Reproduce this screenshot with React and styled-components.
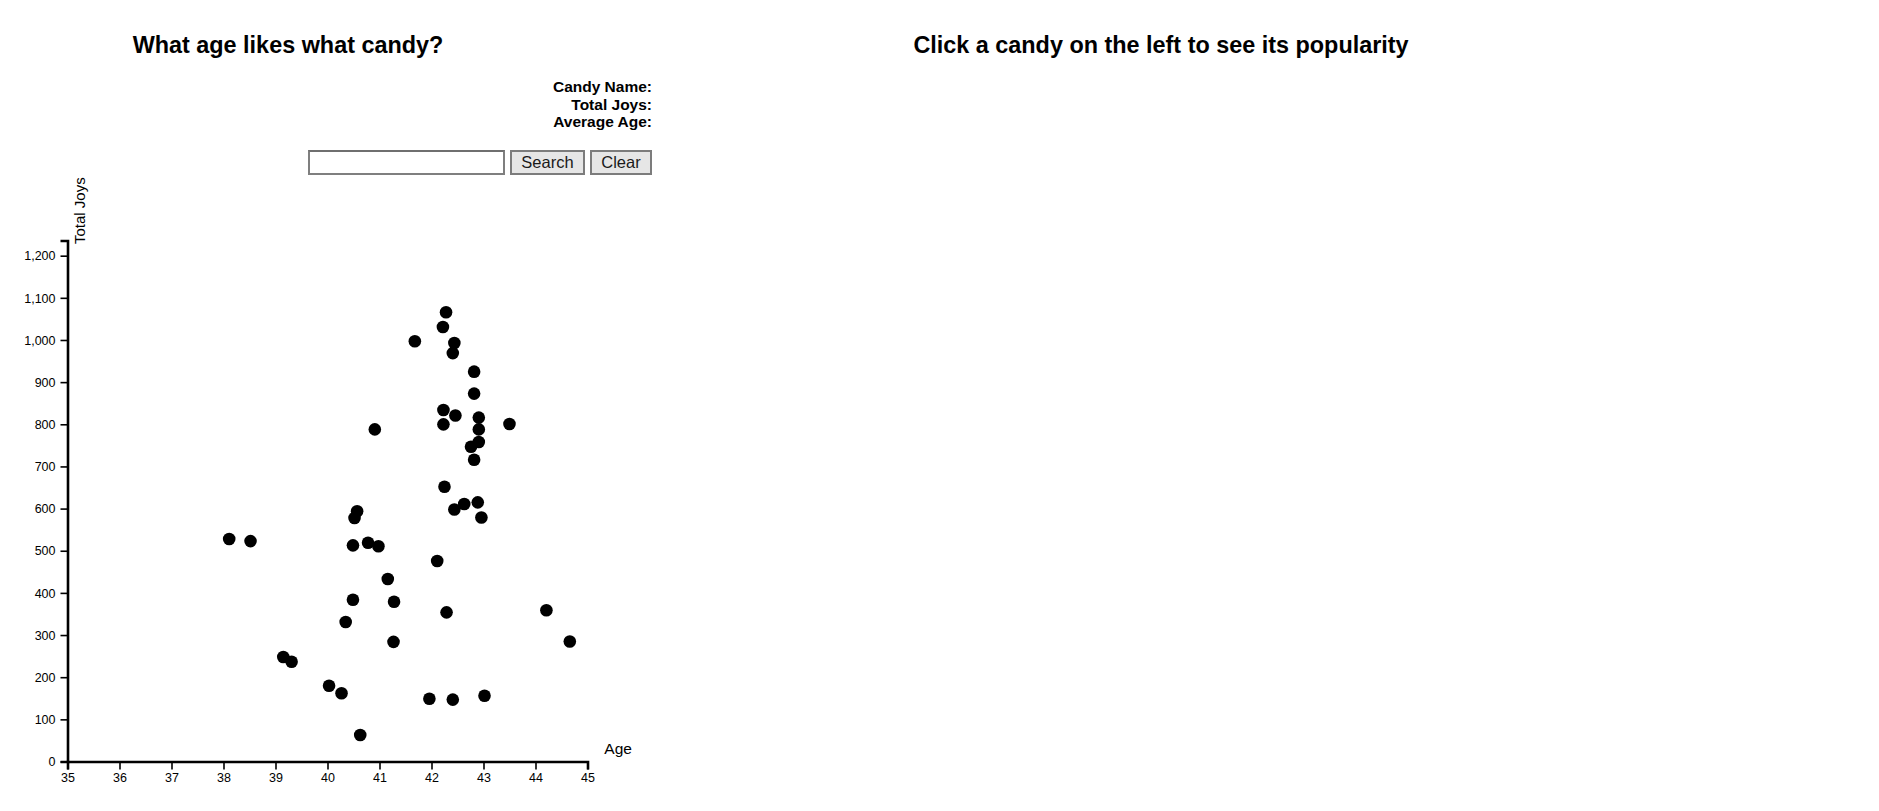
import React from 'react'
import styled, { createGlobalStyle } from 'styled-components'

const GlobalStyle = createGlobalStyle`
  html, body {
    margin: 0;
    padding: 0;
    background: #ffffff;
  }
  body {
    font-family: "Liberation Sans", Arial, sans-serif;
    color: #000;
  }
`

const Page = styled.div`
  display: flex;
  padding: 8px;
`

const LeftPanel = styled.div`
  flex: 0 0 644px;
  display: flex;
  flex-direction: column;
`

const RightPanel = styled.div`
  flex: 0 0 1018px;
`

const Title = styled.h2`
  width: ${(p) => p.width || '100%'};
  margin: 24px 0 19.4px;
  font-size: 23.4px;
  font-weight: bold;
  line-height: 26.4px;
  text-align: center;
`

const Info = styled.div`
  text-align: right;
  font-size: 15.5px;
  font-weight: bold;
  line-height: 17.7px;
`

const SearchRow = styled.div`
  display: flex;
  justify-content: flex-end;
  gap: 5px;
  margin-top: 19px;
  height: 25px;
`

const SearchInput = styled.input`
  box-sizing: border-box;
  width: 197px;
  height: 25px;
  border: 2px solid #7f7f7f;
  border-top-color: #6f6f6f;
  background: #fff;
  padding: 0 3px;
  font-family: "Liberation Sans", Arial, sans-serif;
  font-size: 15px;
`

const Button = styled.button`
  box-sizing: border-box;
  width: ${(p) => p.w}px;
  height: 25px;
  padding: 0;
  border: 2px solid #7c7c7c;
  background: #e6e6e6;
  color: #1a1a1a;
  font-family: "Liberation Sans", Arial, sans-serif;
  font-size: 16.5px;
  line-height: 21px;
  cursor: pointer;
`

const Chart = styled.svg`
  display: block;
  margin-top: 1px;
  font-family: "Liberation Sans", Arial, sans-serif;
`

const candies = [
  [42.27, 1067], [42.21, 1032], [41.67, 998], [42.43, 994], [42.4, 970],
  [42.81, 926], [42.81, 874], [42.22, 835], [42.45, 822], [42.9, 817],
  [42.22, 801], [43.49, 802], [40.9, 789], [42.9, 789], [42.9, 759],
  [42.75, 748], [42.81, 717], [42.24, 653], [42.88, 616], [42.62, 612],
  [42.43, 599], [42.95, 580], [40.56, 595], [40.51, 579], [38.1, 529],
  [38.51, 524], [40.48, 514], [40.77, 520], [40.97, 512], [42.1, 477],
  [41.15, 434], [40.48, 385], [41.27, 380], [42.28, 355], [44.2, 360],
  [40.34, 332], [41.26, 285], [44.65, 286], [39.14, 249], [39.3, 238],
  [40.02, 181], [40.26, 163], [41.95, 150], [42.4, 148], [43.01, 157],
  [40.62, 64],
]

const M = { left: 60, top: 65 }
const W = 520
const H = 521
const X_MIN = 35
const X_MAX = 45
const Y_MAX = 1236
const TICK = 7.5

const sx = (v) => ((v - X_MIN) / (X_MAX - X_MIN)) * W
const sy = (v) => H - (v / Y_MAX) * H

const xTicks = Array.from({ length: 11 }, (_, i) => 35 + i)
const yTicks = Array.from({ length: 13 }, (_, i) => i * 100)

const fmt = (n) => n.toLocaleString('en-US')

const ScatterPlot = () => (
  <Chart width="644" height="620">
    <g transform={`translate(${M.left},${M.top})`}>
      {/* x axis */}
      <g transform={`translate(0,${H})`}>
        {xTicks.map((t) => (
          <g key={t} transform={`translate(${sx(t)},0)`}>
            <line y2={TICK} stroke="#000" strokeWidth="1.6" />
            <text y="20" textAnchor="middle" fontSize="12.5" fill="#000">
              {t}
            </text>
          </g>
        ))}
        <path d={`M0,${TICK}V0H${W}V${TICK}`} fill="none" stroke="#000" strokeWidth="2.6" />
        <text x={W + 16.3} y="-7.7" fontSize="15.5" fill="#000">
          Age
        </text>
      </g>

      {/* y axis */}
      <g>
        {yTicks.map((t) => (
          <g key={t} transform={`translate(0,${sy(t)})`}>
            <line x2={-TICK} stroke="#000" strokeWidth="1.6" />
            <text x="-12.5" dy="0.34em" textAnchor="end" fontSize="12.5" fill="#000">
              {fmt(t)}
            </text>
          </g>
        ))}
        <path d={`M${-TICK},0H0V${H}H${-TICK}`} fill="none" stroke="#000" strokeWidth="2.6" />
        <text transform="translate(16.8,3) rotate(-90)" fontSize="15" fill="#000">
          Total Joys
        </text>
      </g>

      {candies.map(([age, joys], i) => (
        <circle key={i} cx={sx(age)} cy={sy(joys)} r="6.3" fill="#000" />
      ))}
    </g>
  </Chart>
)

const App = () => {
  return (
    <>
      <GlobalStyle />
      <Page>
        <LeftPanel>
          <Title width="560px">What age likes what candy?</Title>
          <Info>
            <div>Candy Name:</div>
            <div>Total Joys:</div>
            <div>Average Age:</div>
          </Info>
          <SearchRow>
            <SearchInput type="text" />
            <Button w={75}>Search</Button>
            <Button w={62}>Clear</Button>
          </SearchRow>
          <ScatterPlot />
        </LeftPanel>
        <RightPanel>
          <Title>Click a candy on the left to see its popularity</Title>
        </RightPanel>
      </Page>
    </>
  )
}

export default App
